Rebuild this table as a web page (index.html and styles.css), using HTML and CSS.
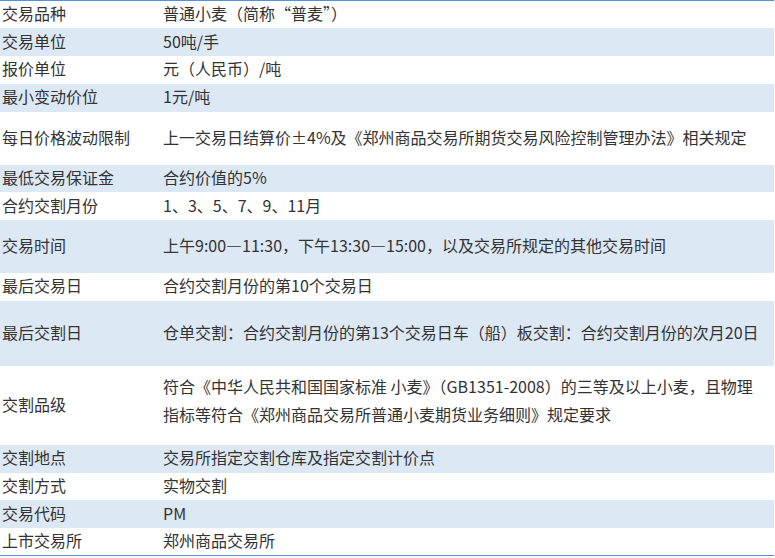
FILE: index.html
```html
<!DOCTYPE html>
<html lang="zh-CN">
<head>
<meta charset="utf-8">
<title>普通小麦期货合约</title>
<link rel="stylesheet" href="styles.css">
</head>
<body>
<table class="spec">
  <tbody>
    <tr class="row"><td class="key">交易品种</td><td class="val">普通小麦（简称<span class="fw">“</span>普麦<span class="fw">”</span>）</td></tr>
    <tr class="row alt"><td class="key">交易单位</td><td class="val">50吨/手</td></tr>
    <tr class="row"><td class="key">报价单位</td><td class="val">元（人民币）/吨</td></tr>
    <tr class="row alt"><td class="key">最小变动价位</td><td class="val">1元/吨</td></tr>
    <tr class="row tall"><td class="key">每日价格波动限制</td><td class="val">上一交易日结算价±4%及《郑州商品交易所期货交易风险控制管理办法》相关规定</td></tr>
    <tr class="row alt"><td class="key">最低交易保证金</td><td class="val">合约价值的5%</td></tr>
    <tr class="row"><td class="key">合约交割月份</td><td class="val">1、3、5、7、9、11月</td></tr>
    <tr class="row alt tall"><td class="key">交易时间</td><td class="val">上午9:00—11:30，下午13:30—15:00，以及交易所规定的其他交易时间</td></tr>
    <tr class="row"><td class="key">最后交易日</td><td class="val">合约交割月份的第10个交易日</td></tr>
    <tr class="row alt taller"><td class="key">最后交割日</td><td class="val">仓单交割：合约交割月份的第13个交易日车（船）板交割：合约交割月份的次月20日</td></tr>
    <tr class="row tallest"><td class="key">交割品级</td><td class="val two">符合《中华人民共和国国家标准 小麦》（GB1351-2008）的三等及以上小麦，且物理指标等符合《郑州商品交易所普通小麦期货业务细则》规定要求</td></tr>
    <tr class="row alt"><td class="key">交割地点</td><td class="val">交易所指定交割仓库及指定交割计价点</td></tr>
    <tr class="row"><td class="key">交割方式</td><td class="val">实物交割</td></tr>
    <tr class="row alt"><td class="key">交易代码</td><td class="val">PM</td></tr>
    <tr class="row"><td class="key">上市交易所</td><td class="val">郑州商品交易所</td></tr>
  </tbody>
</table>
</body>
</html>
```
FILE: styles.css
```css
html, body {
  margin: 0;
  padding: 0;
  background: #ffffff;
}

.spec {
  width: 774px;
  border-collapse: collapse;
  border-top: 1px solid #5b8fd8;
  border-bottom: 1px solid #5b8fd8;
  font-family: "Noto Sans CJK SC", "Noto Sans", sans-serif;
  font-size: 16px;
  color: #333333;
}

.row {
  height: 27.75px;
}

.row.alt {
  background: #dde8f5;
}

.row.tall {
  height: 53px;
}

.row.taller {
  height: 65px;
}

.row.tallest {
  height: 79px;
}

.spec td {
  padding: 0 0 3px 0;
  line-height: 22px;
  vertical-align: middle;
}

.spec td.two {
  line-height: 28px;
  padding-bottom: 10px;
}

.key {
  width: 161px;
  padding-left: 2px !important;
}

.val {
  padding-right: 12px !important;
}

.fw {
  font-feature-settings: "fwid";
}
```
